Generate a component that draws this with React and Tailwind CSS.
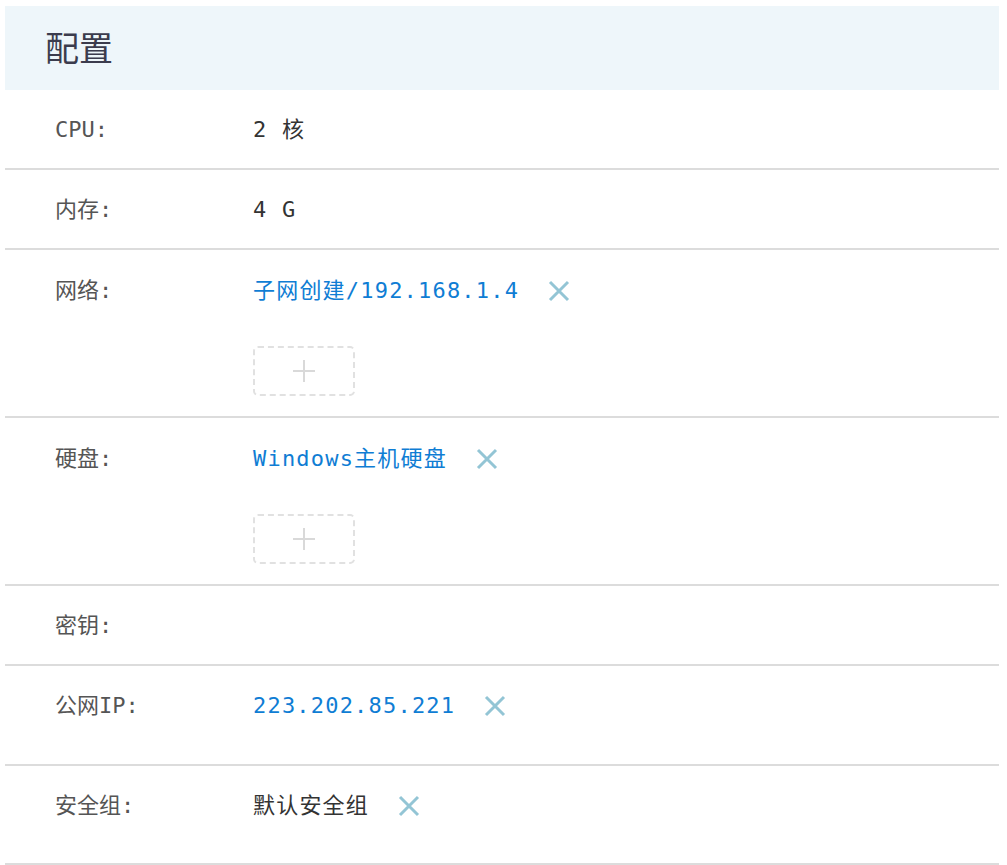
import React from 'react';

// Close icon used next to removable values
function RemoveIcon() {
  return (
    <svg width="22" height="22" viewBox="0 0 22 22" className="shrink-0">
      <path d="M2 2 L20 20 M20 2 L2 20" stroke="#93c5d5" strokeWidth="3" strokeLinecap="butt" />
    </svg>
  );
}

function AddBox() {
  return (
    <div className="w-[102px] h-[50px] border-2 border-dashed border-[#e1e1e1] rounded-[5px] flex items-center justify-center">
      <svg width="24" height="24" viewBox="0 0 24 24">
        <path d="M12 1 V23 M1 12 H23" stroke="#d9d9d9" strokeWidth="2" />
      </svg>
    </div>
  );
}

function Row({ label, children, className = '' }) {
  return (
    <div className={`flex border-b-2 border-[#dcdcdc] pt-[25px] ${className}`}>
      <div className="w-[248px] shrink-0 pl-[50px] text-[#555] leading-[30px] tracking-normal">{label}</div>
      <div className="flex-1">{children}</div>
    </div>
  );
}

function Value({ text, link, removable }) {
  return (
    <div className="flex items-center gap-[29px] leading-[30px]">
      <span className={link ? 'text-[#0f7dd4]' : 'text-[#333]'}>{text}</span>
      {removable && <RemoveIcon />}
    </div>
  );
}

export default function App() {
  return (
    <div className="bg-white min-h-screen pt-[6px] pl-[5px] font-['DejaVu_Sans_Mono','Noto_Sans_CJK_SC',monospace] text-[22px] tracking-[1.2px]">
      <div className="w-[994px]">
        {/* Header */}
        <div className="bg-[#eef6fa] h-[84px] flex items-center pl-[40px] pb-[4px]">
          <h1 className="text-[34px] text-[#3b3c4d] tracking-normal font-['Noto_Sans_CJK_SC',sans-serif]">配置</h1>
        </div>

        <Row label="CPU:" className="pb-[23px]">
          <Value text="2 核" />
        </Row>
        <Row label="内存:" className="pb-[23px]">
          <Value text="4 G" />
        </Row>
        <Row label="网络:" className="pt-[26px] pb-[20px]">
          <Value text="子网创建/192.168.1.4" link removable />
          <div className="mt-[40px]">
            <AddBox />
          </div>
        </Row>
        <Row label="硬盘:" className="pt-[26px] pb-[20px]">
          <Value text="Windows主机硬盘" link removable />
          <div className="mt-[40px]">
            <AddBox />
          </div>
        </Row>
        <Row label="密钥:" className="pb-[23px]">
          <div className="h-[30px]" />
        </Row>
        <Row label="公网IP:" className="pb-[43px]">
          <Value text="223.202.85.221" link removable />
        </Row>
        <Row label="安全组:" className="pb-[42px]">
          <Value text="默认安全组" removable />
        </Row>
      </div>
    </div>
  );
}
